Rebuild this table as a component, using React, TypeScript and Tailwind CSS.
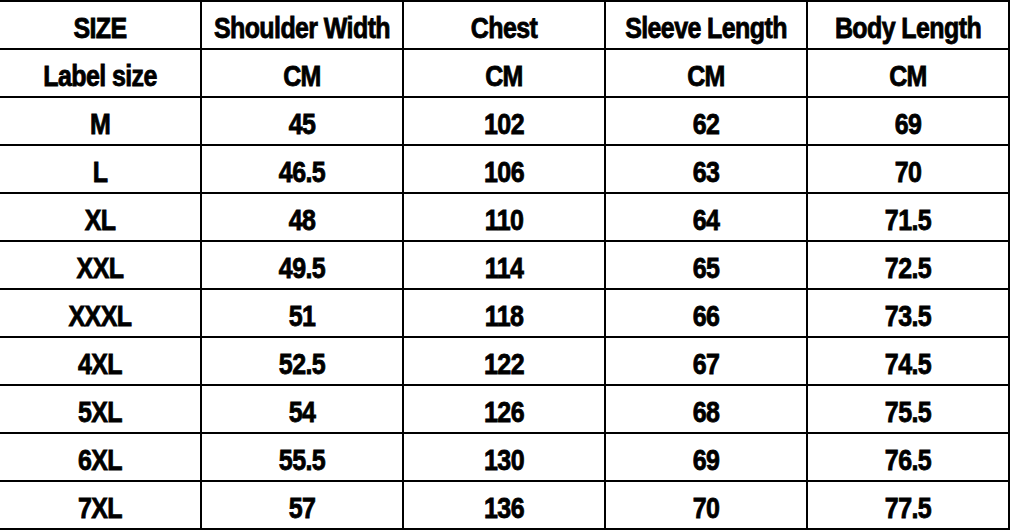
const headers = ["SIZE", "Shoulder Width", "Chest", "Sleeve Length", "Body Length"];

const rows: string[][] = [
  ["Label size", "CM", "CM", "CM", "CM"],
  ["M", "45", "102", "62", "69"],
  ["L", "46.5", "106", "63", "70"],
  ["XL", "48", "110", "64", "71.5"],
  ["XXL", "49.5", "114", "65", "72.5"],
  ["XXXL", "51", "118", "66", "73.5"],
  ["4XL", "52.5", "122", "67", "74.5"],
  ["5XL", "54", "126", "68", "75.5"],
  ["6XL", "55.5", "130", "69", "76.5"],
  ["7XL", "57", "136", "70", "77.5"],
];

function Cell({ text }: { text: string }) {
  return (
    <div className="h-[48px] flex items-center justify-center pt-[7px] border-r-2 border-b-2 border-black">
      <span className="inline-block scale-y-[1.16] text-[25px] font-bold leading-none text-black tracking-[-0.6px] [-webkit-text-stroke:0.7px_black]">
        {text}
      </span>
    </div>
  );
}

export default function App() {
  return (
    <div className="w-[1010px] h-[530px] bg-white overflow-hidden font-['Liberation_Sans',Arial,sans-serif]">
      <div className="grid grid-cols-5 w-[1010px] border-t-2 border-black">
        {headers.map((h) => (
          <Cell key={h} text={h} />
        ))}
        {rows.map((row, i) =>
          row.map((c, j) => <Cell key={`${i}-${j}`} text={c} />)
        )}
      </div>
    </div>
  );
}
